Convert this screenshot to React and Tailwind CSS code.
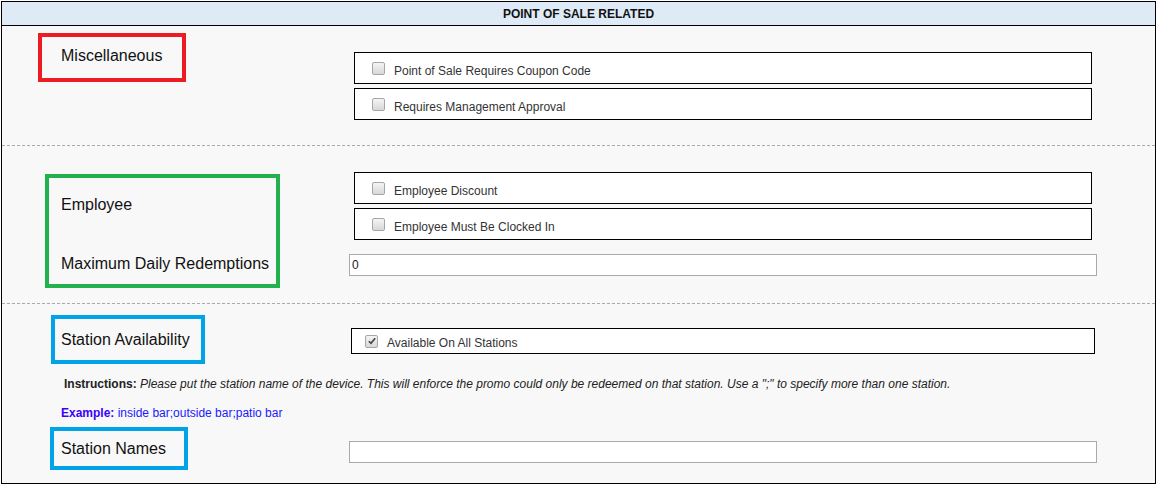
export default function App() {
  const Box = ({ label, checked, className }) => (
    <div className={"flex items-center bg-white border border-black " + className}>
      <span className="relative w-[13px] h-[13px] rounded-[2px] border border-[#a6a6a6] bg-gradient-to-b from-[#f4f4f4] to-[#d8d8d8] flex items-center justify-center">
        {checked && (
          <svg viewBox="0 0 12 12" className="w-[10px] h-[10px]">
            <path d="M2.2 6.3 L4.8 8.8 L9.8 2.8" fill="none" stroke="#444" strokeWidth="2" />
          </svg>
        )}
      </span>
      <span className="text-[12px] text-[#333] pt-[4px]">{label}</span>
    </div>
  );

  return (
    <div className="w-[1157px] h-[485px] bg-white pt-px pl-px" style={{ fontFamily: '"Liberation Sans", Arial, sans-serif' }}>
      <div className="w-[1155px] h-[483px] border border-black bg-[#f8f8f8] flex flex-col">
        {/* header */}
        <div className="h-[24px] bg-[#deebf7] border-b border-black flex items-center justify-center text-[12px] font-bold text-[#111]">
          POINT OF SALE RELATED
        </div>

        {/* Miscellaneous */}
        <div className="h-[120px] flex items-start border-b border-dashed border-[#aaa]">
          <div className="ml-[36px] mt-[7px] w-[148px] h-[49px] border-4 border-[#ed1c24] flex items-center pl-[19px] pb-[4px] text-[16px] text-[#111]">
            Miscellaneous
          </div>
          <div className="ml-[168px] mt-[26px] flex flex-col gap-[4px]">
            <Box label="Point of Sale Requires Coupon Code" className="w-[738px] h-[32px] pl-[17px] gap-[9px] pt-[1px]" />
            <Box label="Requires Management Approval" className="w-[738px] h-[32px] pl-[17px] gap-[9px] pt-[1px]" />
          </div>
        </div>

        {/* Employee */}
        <div className="h-[158px] flex items-start border-b border-dashed border-[#aaa]">
          <div className="ml-[43px] mt-[28px] w-[235px] h-[114px] border-4 border-[#22b14c] flex flex-col justify-between pl-[12px] pt-[15px] pb-[8px] text-[16px] text-[#111]">
            <span>Employee</span>
            <span>Maximum Daily Redemptions</span>
          </div>
          <div className="ml-[69px] mt-[26px] flex flex-col">
            <div className="ml-[5px] flex flex-col gap-[4px]">
              <Box label="Employee Discount" className="w-[738px] h-[32px] pl-[17px] gap-[9px] pt-[1px]" />
              <Box label="Employee Must Be Clocked In" className="w-[738px] h-[32px] pl-[17px] gap-[9px] pt-[1px]" />
            </div>
            <div className="mt-[14px] w-[748px] h-[22px] bg-white border border-[#aaa] flex items-center pl-[2px] text-[12px] text-[#222]">
              0
            </div>
          </div>
        </div>

        {/* Station */}
        <div className="flex-1 flex flex-col">
          <div className="flex items-start">
            <div className="ml-[49px] mt-[11px] w-[154px] h-[49px] border-4 border-[#00a2e8] flex items-center pl-[6px] text-[16px] text-[#111]">
              Station Availability
            </div>
            <div className="ml-[146px] mt-[24px]">
              <Box label="Available On All Stations" checked className="w-[744px] h-[26px] pl-[13px] gap-[9px]" />
            </div>
          </div>
          <div className="mt-[11px] ml-[62px] text-[12px] text-[#222]">
            <span className="font-bold">Instructions:</span>{" "}
            <span className="italic">
              Please put the station name of the device. This will enforce the promo could only be redeemed on that station. Use a ";" to specify more than one station.
            </span>
          </div>
          <div className="mt-[11px] ml-[59px] text-[12px] text-[#1a1aff]">
            <span className="font-bold text-[#3a00ff]">Example:</span> inside bar;outside bar;patio bar
          </div>
          <div className="flex items-start mt-[5px]">
            <div className="ml-[48px] w-[138px] h-[43px] border-4 border-[#00a2e8] flex items-center pl-[7px] text-[16px] text-[#111]">
              Station Names
            </div>
            <div className="ml-[161px] mt-[14px] w-[748px] h-[22px] bg-white border border-[#aaa]" />
          </div>
        </div>
      </div>
    </div>
  );
}
